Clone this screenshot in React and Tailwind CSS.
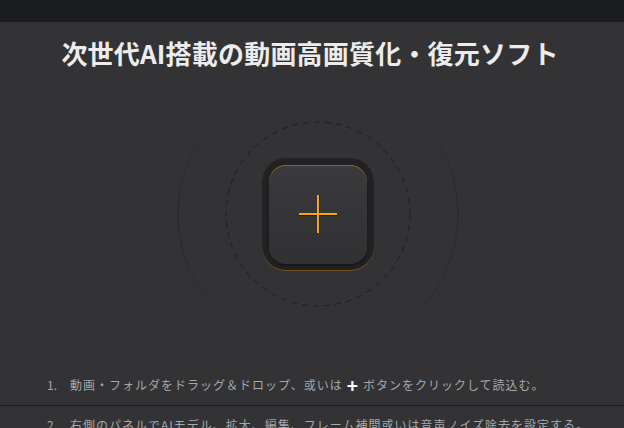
import React from "react";

export default function App() {
  const font = { fontFamily: '"Noto Sans CJK JP", "Noto Sans", sans-serif' };
  return (
    <div className="w-[624px] h-[428px] overflow-hidden bg-[#333335] flex flex-col" style={font}>
      <div className="h-[22px] shrink-0 bg-[#1c1d1f]" />
      <div className="h-[62px] shrink-0 flex items-center justify-center pr-[4px]">
        <h1 className="text-[26px] font-bold text-[#ececec] leading-none tracking-[0.2px]">次世代AI搭載の動画高画質化・復元ソフト</h1>
      </div>
      <div className="relative h-[260px] shrink-0 flex items-center justify-center pl-[12px]">
        <svg className="absolute left-[172px] top-[-16px]" width="292" height="292" viewBox="0 0 292 292">
          <defs>
            <linearGradient id="fade" x1="0" y1="0" x2="0" y2="1">
              <stop offset="0" stopColor="#28282a" stopOpacity="0.1" />
              <stop offset="0.5" stopColor="#28282a" stopOpacity="1" />
              <stop offset="0.85" stopColor="#28282a" stopOpacity="0.6" />
              <stop offset="1" stopColor="#28282a" stopOpacity="0" />
            </linearGradient>
          </defs>
          <circle cx="146" cy="146" r="140" fill="none" stroke="url(#fade)" strokeWidth="1" />
          <circle cx="146" cy="146" r="92" fill="none" stroke="#1f1f21" strokeWidth="1" strokeDasharray="6 5" />
        </svg>
        <div className="relative w-[112px] h-[113px] rounded-[24px] bg-[#222224] p-[7px] shadow-[inset_0_-1px_0_#6e5220]">
          <div className="w-full h-full rounded-[17px] bg-gradient-to-b from-[#3a3a3c] to-[#313133] shadow-[inset_0_1px_0_#8a6620,0_2px_3px_rgba(0,0,0,0.35)] flex items-center justify-center">
            <svg width="44" height="44" viewBox="0 0 44 44">
              <g stroke="rgba(0,0,0,0.45)" strokeWidth="2">
                <line x1="3" y1="23" x2="41" y2="23" />
                <line x1="23" y1="3" x2="23" y2="41" />
              </g>
              <g stroke="#f5a800" strokeWidth="2">
                <line x1="3" y1="22" x2="41" y2="22" />
                <line x1="22" y1="3" x2="22" y2="41" />
              </g>
            </svg>
          </div>
        </div>
      </div>
      <div className="h-[20px] shrink-0" />
      <div className="flex-1 flex flex-col">
        <div className="h-[41px] flex items-center pl-[47px] text-[12px] tracking-[1px] text-[#a3a7ae]">
          <span className="w-[23px] tracking-normal">1.</span>
          <span>動画・フォルダをドラッグ＆ドロップ、或いは</span>
          <span className="text-white font-bold text-[19px] leading-none mx-[4px]">+</span>
          <span>ボタンをクリックして読込む。</span>
        </div>
        <div className="h-px bg-[#1e1e20]" />
        <div className="h-[34px] flex items-center pl-[47px] pt-[3px] text-[12px] tracking-[1px] text-[#a3a7ae]">
          <span className="w-[23px] tracking-normal">2.</span>
          <span>右側のパネルでAIモデル、拡大、編集、フレーム補間或いは音声ノイズ除去を設定する。</span>
        </div>
      </div>
    </div>
  );
}
